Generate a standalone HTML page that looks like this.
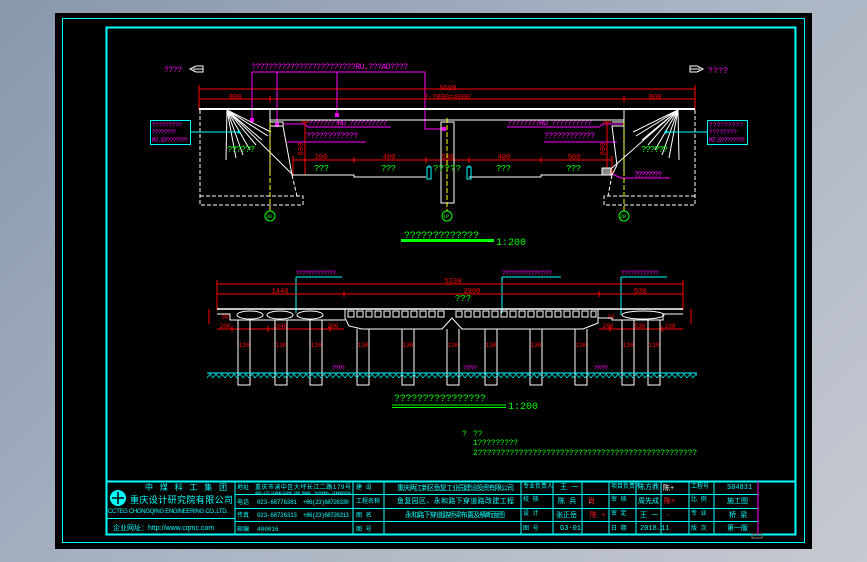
<!DOCTYPE html>
<html><head><meta charset="utf-8"><style>
html,body{margin:0;padding:0;width:867px;height:562px;overflow:hidden;background:linear-gradient(135deg,#8898ad 0%,#a9b3c3 50%,#c6c9d1 100%);}
svg{position:absolute;left:0;top:0}
text{font-family:"Liberation Mono","Noto Sans CJK SC",monospace;}
.m{fill:#ff00ff;font-size:8px}
.g{fill:#00ff00;font-size:9px}
.r{fill:#ff0000;font-size:7px}
.c{fill:#00ffff;font-size:7px;font-family:"Liberation Sans","Noto Sans CJK SC",sans-serif}
.w{fill:#fff;font-size:8px}
</style></head><body>
<svg width="867" height="562" viewBox="0 0 867 562">
<defs>
<pattern id="hatch" x="207" y="373" width="6" height="5" patternUnits="userSpaceOnUse">
<path d="M0 5L3 1L6 5" stroke="#00ffff" stroke-width="0.7" fill="none"/>
</pattern>
</defs>
<rect x="55" y="13" width="757" height="536" fill="#000"/>
<rect x="62.5" y="18.5" width="742" height="524" fill="none" stroke="#00ffff" stroke-width="1"/>
<rect x="106.5" y="27.5" width="689" height="507" fill="none" stroke="#00ffff" stroke-width="2"/>

<!-- ===== TOP PLAN ===== -->
<text x="164" y="72" class="m" textLength="18">????</text>
<path d="M203 69H193M196 66L190 69L196 72M196 66H203V72H196" stroke="#fff" fill="none" stroke-width="1"/>
<path d="M690 69H700M697 66L703 69L697 72M697 66H690V72H697" stroke="#fff" fill="none" stroke-width="1"/>
<text x="708" y="73" class="m" textLength="20">????</text>
<text x="251" y="69" class="m" textLength="157">????????????????????????RU.???AD????</text>
<g stroke="#ff00ff" fill="none">
<path d="M252 72H425V129H444M252 72V120M277 72V125M337 72V115"/>
<path d="M283 124H305L308 127H391M287 142H366"/>
<path d="M624 124H603L599 127H507M544 142H617"/>
<path d="M612 174L621 178H670"/>
</g>
<g fill="#ff00ff"><rect x="250" y="118" width="4" height="4"/><rect x="275" y="123" width="4" height="4"/><rect x="335" y="113" width="4" height="4"/><rect x="442" y="127" width="4" height="4"/></g>
<text x="308" y="125" class="m" font-size="7" textLength="79">????????RU ??????????</text>
<text x="306" y="138" class="m" font-size="7" textLength="52">????????????</text>
<text x="507" y="125" class="m" font-size="7" textLength="85">????????RU ??????????</text>
<text x="544" y="138" class="m" font-size="7" textLength="51">????????????</text>
<text x="634" y="177" class="m" font-size="7" textLength="28">????????</text>
<g stroke="#ff0000" fill="none">
<path d="M199 89H695M199 99H695M199 85V110M695 85V110M270 96V102M624 96V102"/>
<path d="M293 160H612M293 156V176M354 157V163M426 157V163M469 157V163M541 157V163M612 156V176"/>
<path d="M305 122V175M301 122H309M607 122V175M603 122H611"/>
</g>
<text x="448" y="90" class="r" text-anchor="middle">5600</text>
<text x="235" y="99" class="r" text-anchor="middle">800</text>
<text x="447" y="99" class="r" text-anchor="middle">2·2000=4000</text>
<text x="655" y="99" class="r" text-anchor="middle">800</text>
<text x="321" y="159" class="r" text-anchor="middle">200</text>
<text x="389" y="159" class="r" text-anchor="middle">400</text>
<text x="448" y="159" class="r" text-anchor="middle">500</text>
<text x="504" y="159" class="r" text-anchor="middle">400</text>
<text x="574" y="159" class="r" text-anchor="middle">500</text>
<text x="303" y="149" class="r" transform="rotate(-90 303 149)" text-anchor="middle">600</text>
<text x="605" y="149" class="r" transform="rotate(-90 605 149)" text-anchor="middle">600</text>
<g stroke="#fff" fill="none">
<path d="M199 109H695" stroke-width="2"/>
<path d="M270 120H624M270 110V175M624 110V175"/>
<path d="M270 122H283V126H270M283 126L292 175H354V177H426M469 177H541V175H612L617 165L612 126H624V122H612"/>
<path d="M441 122H454V203H441Z"/>
<path d="M227 110L293 175M227 110L226 160M227 110L236 158M227 110L243 155M227 110L250 150M227 110L256 145M227 110L262 140M227 110L268 136M227 110L271 132"/>
<path d="M678 110L604 175M678 110L679 160M678 110L669 158M678 110L662 155M678 110L655 150M678 110L648 145M678 110L642 140M678 110L636 136M678 110L633 132"/>
<g stroke-dasharray="4 2">
<path d="M200 110V205H303V196H200M292 175L297 196"/>
<path d="M695 110V205H604V196H695M612 175L608 196"/>
</g>
</g>
<rect x="602" y="168" width="9" height="7" fill="#888" stroke="#fff"/>
<g stroke="#ffff00" stroke-dasharray="5 2"><path d="M270 122V211M447 118V211M624 122V211"/></g>
<g stroke="#00ff00" fill="none"><circle cx="270" cy="216" r="5"/><circle cx="447" cy="216" r="5"/><circle cx="624" cy="216" r="5"/></g>
<g><text x="266" y="218" style="font-size:5px;fill:#0f0">30</text><text x="443" y="218" style="font-size:5px;fill:#0f0">1P</text><text x="620" y="218" style="font-size:5px;fill:#0f0">2R</text></g>
<g stroke="#00ffff" fill="none"><rect x="427" y="167" width="4" height="12"/><rect x="467" y="167" width="4" height="12"/><path d="M429 165V167M469 165V167"/>
<rect x="150.5" y="120.5" width="40" height="24"/><path d="M190 132H239"/>
<rect x="707.5" y="120.5" width="40" height="24"/><path d="M707 132H666"/></g>
<circle cx="239" cy="132" r="1.5" fill="#0ff"/><circle cx="666" cy="132" r="1.5" fill="#0ff"/>
<g class="m" style="font-size:6px"><text x="152" y="127" textLength="30">?????????</text><text x="152" y="134" textLength="24">????????</text><text x="152" y="142" textLength="36">M7.5????????</text>
<text x="709" y="127" textLength="34">?????????</text><text x="709" y="134" textLength="28">????????</text><text x="709" y="142" textLength="36">M7.5????????</text></g>
<g class="g"><text x="227" y="152" textLength="28">??????</text><text x="641" y="152" textLength="27">??????</text>
<text x="314" y="171" textLength="15">???</text><text x="381" y="171" textLength="15">???</text><text x="433" y="171" textLength="28">?????</text><text x="496" y="171" textLength="15">???</text><text x="566" y="171" textLength="15">???</text></g>
<text x="404" y="238" class="g" textLength="75" style="font-size:10px">?????????????</text>
<rect x="401" y="239" width="93" height="3" fill="#0f0"/>
<text x="496" y="245" class="g" style="font-size:10px">1:200</text>

<!-- ===== ELEVATION ===== -->
<g stroke="#00ffff" fill="none"><path d="M296 277H342M296 277V313M502 277H561M502 277V313M621 277H667M621 277V315"/></g>
<text x="296" y="275" class="m" style="font-size:6px" textLength="40">?????????????</text>
<text x="502" y="275" class="m" style="font-size:6px" textLength="50">?????????????????</text>
<text x="621" y="275" class="m" style="font-size:6px" textLength="38">????????????</text>
<g stroke="#ff0000" fill="none">
<path d="M217 284H683M217 280V310M683 280V310M217 294H683M344 291V297M599 291V297"/>
<path d="M217 329H344M599 329H683M232 326V332M268 326V332M330 326V332M610 326V332M662 326V332"/>
<path d="M209 309V324M691 309V324"/>
</g>
<text x="453" y="283" class="r" text-anchor="middle">5230</text>
<text x="280" y="293" class="r" text-anchor="middle">1440</text>
<text x="472" y="293" class="r" text-anchor="middle">2900</text>
<text x="640" y="293" class="r" text-anchor="middle">930</text>
<text x="463" y="301" class="g" text-anchor="middle">???</text>
<g class="r" style="font-size:6px"><text x="225" y="328" text-anchor="middle">200</text><text x="280" y="328" text-anchor="middle">1040</text><text x="333" y="328" text-anchor="middle">200</text><text x="608" y="328" text-anchor="middle">200</text><text x="640" y="328" text-anchor="middle">530</text><text x="670" y="328" text-anchor="middle">200</text>
<text x="225" y="319" text-anchor="middle">30</text><text x="611" y="319" text-anchor="middle">30</text></g>
<g stroke="#fff" fill="none">
<path d="M217 309H683" stroke-width="1.5"/>
<path d="M217 314H230V320H345M345 309V318L349 326L362 329H442L452 318L462 329H583L598 323V309M598 318H612V320H663V314H683"/>
<ellipse cx="250" cy="315" rx="13" ry="4"/><ellipse cx="280" cy="315" rx="13" ry="4"/><ellipse cx="310" cy="315" rx="13" ry="4"/><ellipse cx="643" cy="315" rx="21" ry="4"/>
</g>
<g stroke="#fff" fill="none">
<path d="M348 311h6v6h-6zM357 311h6v6h-6zM366 311h6v6h-6zM375 311h6v6h-6zM384 311h6v6h-6zM393 311h6v6h-6zM402 311h6v6h-6zM411 311h6v6h-6zM420 311h6v6h-6zM429 311h6v6h-6zM438 311h6v6h-6zM456 311h6v6h-6zM465 311h6v6h-6zM474 311h6v6h-6zM483 311h6v6h-6zM492 311h6v6h-6zM501 311h6v6h-6zM510 311h6v6h-6zM519 311h6v6h-6zM528 311h6v6h-6zM537 311h6v6h-6zM546 311h6v6h-6zM555 311h6v6h-6zM564 311h6v6h-6zM573 311h6v6h-6zM582 311h6v6h-6zM591 311h5v6h-5z"/>
</g>
<g stroke="#fff" fill="none">
<path d="M238 320V385h12V320M275 320V385h12V320M310 320V385h12V320M357 329V385h12V329M402 329V385h12V329M447 329V385h12V329M485 329V385h12V329M530 329V385h12V329M575 329V385h12V329M622 320V385h12V320M648 320V385h12V320"/>
</g>
<g class="r" style="font-size:6px"><text x="244" y="347" text-anchor="middle">130</text><text x="281" y="347" text-anchor="middle">130</text><text x="316" y="347" text-anchor="middle">130</text><text x="363" y="347" text-anchor="middle">130</text><text x="408" y="347" text-anchor="middle">130</text><text x="453" y="347" text-anchor="middle">130</text><text x="491" y="347" text-anchor="middle">130</text><text x="536" y="347" text-anchor="middle">130</text><text x="581" y="347" text-anchor="middle">130</text><text x="628" y="347" text-anchor="middle">130</text><text x="654" y="347" text-anchor="middle">130</text></g>
<path d="M207 373H697" stroke="#00ffff"/>
<rect x="207" y="373" width="490" height="5" fill="url(#hatch)"/>
<g class="m" style="font-size:6px"><text x="332" y="370" textLength="13">?????</text><text x="463" y="370" textLength="14">?????</text><text x="594" y="370" textLength="14">?????</text></g>
<text x="394" y="401" class="g" textLength="92" style="font-size:10px">????????????????</text>
<path d="M392 405H506M392 407.5H506" stroke="#0f0"/>
<text x="508" y="409" class="g" style="font-size:10px">1:200</text>

<g class="g" style="font-size:8px"><text x="462" y="436">?</text><text x="473" y="436">??</text>
<text x="473" y="445" textLength="45">1?????????</text>
<text x="473" y="455" textLength="224">2????????????????????????????????????????????????</text></g>

<!-- ===== TITLE BLOCK ===== -->
<g stroke="#00ffff" fill="none" stroke-width="1">
<path d="M106 481.5H796" stroke-width="2"/>
<path d="M235 481V535M353 481V535M384 481V535M521 481V535M553 481V535M582 481V535M609 481V535M636 481V535M661 481V535M689 481V535M714 481V535M758 481V535"/>
<path d="M106 518.5H235M235 494.5H758M235 508.5H758M235 521.5H758"/>
<path d="M353 521.5H384"/>
</g>
<path d="M758 481V535" stroke="#ff00ff"/>
<circle cx="118" cy="498" r="8" fill="#00ffff"/>
<path d="M112 498h12M118 492v12" stroke="#000" stroke-width="1.5"/>
<text x="145" y="490" class="c" style="font-size:8px" textLength="82">中 煤 科 工 集 团</text>
<text x="130" y="503" class="c" style="font-size:9px" textLength="103">重庆设计研究院有限公司</text>
<text x="108" y="513" class="c" style="font-size:6px" textLength="120">CCTEG CHONGQING ENGINEERING CO.,LTD.</text>
<text x="113" y="530" class="c" style="font-size:7px">企业网址：http://www.cqmc.com</text>
<g class="c" style="font-size:6px">
<text x="237" y="489">地址</text><text x="255" y="489" textLength="96">重庆市渝中区大坪长江二路179号</text>
<text x="255" y="494" textLength="96" style="font-size:4px">ADD:179 CHANGJIANG 2ND ROAD, YUZHONG, CHONGQING</text>
<text x="237" y="504">电话</text><text x="257" y="504" textLength="40">023-68776381</text><text x="303" y="504" textLength="46">+86(23)68726330</text>
<text x="237" y="517">传真</text><text x="257" y="517" textLength="40">023-68726313</text><text x="303" y="517" textLength="46">+86(23)68726313</text>
<text x="237" y="531">邮编</text><text x="257" y="531">400016</text>
<text x="356" y="489">建 设</text><text x="356" y="503">工程名称</text><text x="356" y="517">图 名</text><text x="356" y="531">图 号</text>
<text x="397" y="490" textLength="117" style="font-size:7px">重庆两江新区鱼复工业园建设投资有限公司</text>
<text x="397" y="503" textLength="117" style="font-size:7px">鱼复园区、永和路下穿道路改建工程</text>
<text x="405" y="517" textLength="100" style="font-size:7px">永和路下穿道路桥梁布置及横断面图</text>
<text x="523" y="488">专业负责人</text><text x="523" y="501">校 核</text><text x="523" y="515">设 计</text><text x="523" y="530">图 号</text>
<text x="560" y="489" style="font-size:7px">王 一</text><text x="558" y="503" style="font-size:7px">陈 兵</text><text x="556" y="517" style="font-size:7px">张正岳</text><text x="560" y="530" style="font-size:7px">G3-01</text>
<text x="611" y="488">项目负责人</text><text x="611" y="501">审 核</text><text x="611" y="515">审 定</text><text x="611" y="530">日 期</text>
<text x="638" y="489" style="font-size:7px">陈方鼎</text><text x="638" y="503" style="font-size:7px">周先成</text><text x="640" y="517" style="font-size:7px">王 一</text><text x="640" y="530" style="font-size:7px">2018.11</text>
<text x="691" y="488">工程号</text><text x="691" y="501">比 例</text><text x="691" y="515">专 业</text><text x="691" y="530">版 次</text>
<text x="727" y="489" style="font-size:7px">S04831</text><text x="727" y="503" style="font-size:7px">施工图</text><text x="729" y="517" style="font-size:7px">桥 梁</text><text x="727" y="530" style="font-size:7px">第一版</text>
</g>
<g fill="#ff2020" font-size="7" style="font-family:'Noto Sans CJK SC',sans-serif"><text x="588" y="503">肖</text><text x="590" y="517">陈 +</text><text x="664" y="503">陈+</text><text x="666" y="517">·</text></g>
<g fill="#fff" font-size="7" style="font-family:'Noto Sans CJK SC',sans-serif"><text x="588" y="503">.</text><text x="663" y="490">陈+</text></g>
<rect x="752" y="534" width="10" height="4" fill="none" stroke="#777"/>
</svg>
</body></html>
